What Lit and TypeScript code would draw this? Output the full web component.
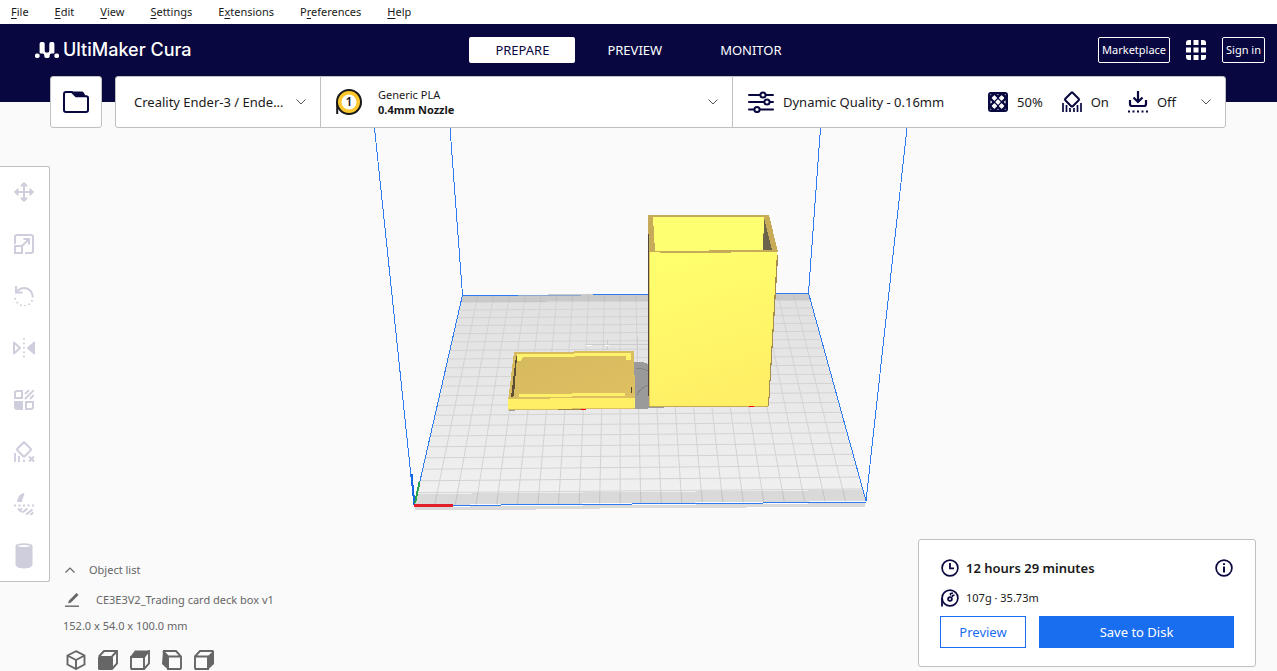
import { LitElement, html, css, svg, nothing } from "lit";
import { customElement, property } from "lit/decorators.js";

type Pt = [number, number];

/* ---- build plate geometry ---- */
const BL: Pt = [462, 295];
const BR: Pt = [809, 293];
const FR: Pt = [866, 501];
const FL: Pt = [414, 505];

/* maps (u, v) in the unit square onto the plate as seen by the camera */
function project(u: number, v: number): Pt {
  const dx1 = BR[0] - FR[0], dx2 = FL[0] - FR[0];
  const dy1 = BR[1] - FR[1], dy2 = FL[1] - FR[1];
  const sx = BL[0] - BR[0] + FR[0] - FL[0];
  const sy = BL[1] - BR[1] + FR[1] - FL[1];
  const det = dx1 * dy2 - dx2 * dy1;
  const g = (sx * dy2 - dx2 * sy) / det;
  const h = (dx1 * sy - sx * dy1) / det;
  const a = BR[0] - BL[0] + g * BR[0], b = FL[0] - BL[0] + h * FL[0];
  const d = BR[1] - BL[1] + g * BR[1], e = FL[1] - BL[1] + h * FL[1];
  const w = g * u + h * v + 1;
  return [(a * u + b * v + BL[0]) / w, (d * u + e * v + BL[1]) / w];
}

const poly = (...pts: Pt[]) => pts.map((p) => p.map((n) => n.toFixed(1)).join(",")).join(" ");
const CELLS = 22;
const gridPath = (() => {
  const out: string[] = [];
  const line = (p: Pt, q: Pt) =>
    out.push(`M${p[0].toFixed(1)} ${p[1].toFixed(1)}L${q[0].toFixed(1)} ${q[1].toFixed(1)}`);
  for (let i = 1; i < CELLS; i++) {
    const t = i / CELLS;
    line(project(t, 0), project(t, 1));
    line(project(0, t), project(1, t));
  }
  return out.join("");
})();

/* ---- icons ---- */
const ICONS: Record<string, { box: string; body: unknown }> = {
  folder: {
    box: "0 0 26 22",
    body: svg`<path d="M3 1.1H8.8L13 5.2H23.2Q25 5.2 25 7V19Q25 20.9 23 20.9H3Q1 20.9 1 19V3Q1 1.1 3 1.1Z" fill="none" stroke="currentColor" stroke-width="2"/><path d="M9 .6H18.5Q20 .6 20.8 1.8L23 5.4H13.2Z" fill="currentColor"/>`,
  },
  down: { box: "0 0 10 6", body: svg`<path d="M.5 .5L5 5L9.500 .5" fill="none" stroke="currentColor"/>` },
  up: { box: "0 0 10 6", body: svg`<path d="M.5 5.500L5 1L9.500 5.500" fill="none" stroke="currentColor" stroke-width="1.200"/>` },
  spool: {
    box: "0 0 26 26",
    body: svg`<path d="M1.200 13V25" stroke="#191919" stroke-width="2"/><circle cx="13" cy="13" r="12" fill="#ffc72e" stroke="#191919" stroke-width="2"/><circle cx="13" cy="13" r="7.500" fill="#fff"/>`,
  },
  sliders: {
    box: "0 0 26 22",
    body: svg`<g fill="none" stroke="currentColor" stroke-width="2"><path d="M1 4H12M18 4H25M1 11H16M22 11H25M1 18.500H6M12 18.500H25" stroke-linecap="round"/><circle cx="15" cy="4" r="2.600"/><circle cx="19" cy="11" r="2.600"/><circle cx="9" cy="18.500" r="2.600"/></g>`,
  },
  infill: {
    box: "0 0 20 20",
    body: svg`<rect width="20" height="20" rx="3" fill="currentColor"/><path fill="#fff" stroke="#fff" stroke-width="1.200" stroke-linejoin="round" d="M6.400 4L8.400 6L6.400 8L4.400 6ZM13.600 4L15.600 6L13.600 8L11.600 6ZM10 8L12 10L10 12L8 10ZM6.400 12L8.400 14L6.400 16L4.400 14ZM13.600 12L15.600 14L13.600 16L11.600 14Z"/><path fill="#fff" d="M2.500 8.300L4.300 10L2.500 11.700ZM17.500 8.300L15.700 10L17.500 11.700ZM9 2.300H11L10 3.300ZM9 17.700H11L10 16.700ZM2.300 2.300H3.600L2.300 3.600ZM17.700 2.300H16.400L17.700 3.600ZM2.300 17.700H3.600L2.300 16.400ZM17.700 17.700H16.400L17.700 16.400Z"/>`,
  },
  support: {
    box: "0 0 20 22",
    body: svg`<path d="M10.700 1.700L16.700 7.700Q17.500 8.500 16.700 9.300L11 15Q10 16 9 15L3.300 9.300Q2.500 8.500 3.300 7.700L9.300 1.700Q10 1 10.700 1.700Z" fill="none" stroke="currentColor" stroke-width="2"/><path d="M1 12V21M4.500 14V21M8 17V21M12 17V21M15.500 14V21M19 12V21" stroke="currentColor" stroke-width="1.700"/>`,
  },
  adhesion: {
    box: "0 0 20 22",
    body: svg`<path d="M10 0V10M5.500 6.500L10 11L14.500 6.500M2 9V13Q2 15 4 15H16Q18 15 18 13V9" fill="none" stroke="currentColor" stroke-width="2.200"/><path d="M0 20.500H20" stroke="currentColor" stroke-width="2" stroke-dasharray="2 2.500"/>`,
  },
  apps: {
    box: "0 0 20 20",
    body: svg`<path fill="currentColor" d="M3 0H5V5H0V3Q0 0 3 0ZM7.500 0H12.500V5H7.500ZM15 0H17Q20 0 20 3V5H15ZM0 7.500H5V12.500H0ZM7.500 7.500H12.500V12.500H7.500ZM15 7.500H20V12.500H15ZM0 15H5V20H3Q0 20 0 17ZM7.500 15H12.500V20H7.500ZM15 15H20V17Q20 20 17 20H15Z"/>`,
  },
  mark: {
    box: "0 0 24 16",
    body: svg`<g fill="currentColor"><rect y="11.400" width="4.600" height="4.600" rx="1.700"/><rect x="19.400" y="11.400" width="4.600" height="4.600" rx="1.700"/><path d="M4.600 1.700Q4.600 0 6.300 0H8Q9.700 0 9.700 1.700V8.500Q9.700 10.500 11 10.500H13Q14.300 10.500 14.300 8.500V1.700Q14.300 0 16 0H17.700Q19.400 0 19.400 1.700V10.600Q19.400 11.600 18.400 11.600H16.500Q14.700 11.600 14.700 13.200V14.300Q14.700 16 13 16H11Q9.300 16 9.300 14.300V13.200Q9.300 11.600 7.500 11.600H5.600Q4.600 11.600 4.600 10.600Z"/></g>`,
  },
  move: {
    box: "0 0 20 20",
    body: svg`<path d="M10 1.500V18.500M1.500 10H18.500M7 4.300L10 1.300L13 4.300M7 15.700L10 18.700L13 15.700M4.300 7L1.300 10L4.300 13M15.700 7L18.700 10L15.700 13" fill="none" stroke="currentColor" stroke-width="2.100"/>`,
  },
  scale: {
    box: "0 0 20 20",
    body: svg`<path d="M1 10V3Q1 1 3 1H17Q19 1 19 3V17Q19 19 17 19H11M1 12H8V19H1ZM8 12L15 5M9.500 5H15V10.500" fill="none" stroke="currentColor" stroke-width="2"/>`,
  },
  rotate: {
    box: "0 0 20 20",
    body: svg`<path d="M2 0V6.500H8.500M2.500 6Q5.500 2 10.500 2Q18 2.500 19 11.500" fill="none" stroke="currentColor" stroke-width="2"/><path d="M18 15A9 9 0 0 1 1 11" fill="none" stroke="currentColor" stroke-width="2" stroke-linecap="round" stroke-dasharray="0 4.300"/>`,
  },
  mirror: {
    box: "0 0 22 20",
    body: svg`<path d="M1 4.500L7 10L1 15.500Z" fill="none" stroke="currentColor" stroke-width="2" stroke-linejoin="round"/><path d="M22 4V16Q21.500 17 20.500 16L14.500 11Q14 10 14.500 9L20.500 4Q21.500 3 22 4Z" fill="currentColor"/><path d="M11 1V20" stroke="currentColor" stroke-width="2" stroke-linecap="round" stroke-dasharray="0 4.400"/>`,
  },
  modeltype: {
    box: "0 0 20 20",
    body: svg`<path d="M3 1H8V8H1V3Q1 1 3 1ZM12 12H19V17Q19 19 17 19H12Z" fill="none" stroke="currentColor" stroke-width="2"/><path d="M0 11H9V20H3Q0 20 0 17Z" fill="currentColor"/><path d="M11 4L15 0M11 9L20 0M16 9L20 5" stroke="currentColor" stroke-width="1.900"/>`,
  },
  blocker: {
    box: "0 0 21 22",
    body: svg`<path d="M10.700 1.700L16.700 7.700Q17.500 8.500 16.700 9.300L11 15Q10 16 9 15L3.300 9.300Q2.500 8.500 3.300 7.700L9.300 1.700Q10 1 10.700 1.700Z" fill="none" stroke="currentColor" stroke-width="2"/><path d="M1 12V21M5 15V21M10 18.500V21" stroke="currentColor" stroke-width="1.800"/><path d="M15 15.500L20 20.500M20 15.500L15 20.500" stroke="currentColor" stroke-width="2"/>`,
  },
  overhang: {
    box: "0 0 20 22",
    body: svg`<path d="M3 9Q4 1 10 0Q11 1.500 9.500 3.500Q8 6 8 9Z" fill="currentColor"/><path d="M0 12.500H20" stroke="currentColor" stroke-width="2" stroke-dasharray="2 2.500"/><path d="M4 15.500L7.500 19M8 15.500L5.500 17.500M8.500 19.500L13.500 15.500M12 21.500L18.500 16.500M16 22L19.500 19.500" stroke="currentColor" stroke-width="2"/>`,
  },
  cylinder: {
    box: "0 0 18 26",
    body: svg`<path d="M1 3V22.500Q3 25 9 25T17 22.500V3Z" fill="currentColor" stroke="currentColor"/><ellipse cx="9" cy="3" rx="7.500" ry="1.800" fill="#fff" stroke="currentColor" stroke-width="1.800"/>`,
  },
  pencil: {
    box: "0 0 14 14",
    body: svg`<path d="M3 10.500L4 7.500L11.500 0L13.500 2L6 9.500Z" fill="currentColor"/><path d="M0 13.200H14" stroke="currentColor" stroke-width="1.400"/>`,
  },
  clock: {
    box: "0 0 18 18",
    body: svg`<circle cx="9" cy="9" r="7.900" fill="none" stroke="currentColor" stroke-width="1.700"/><path d="M9 4V9.300H13" fill="none" stroke="currentColor" stroke-width="1.800"/>`,
  },
  material: {
    box: "0 0 18 18",
    body: svg`<circle cx="9" cy="9" r="7.900" fill="none" stroke="currentColor" stroke-width="1.700"/><path d="M1 9V17.500" stroke="currentColor" stroke-width="1.800"/><circle cx="9" cy="10" r="1.900" fill="none" stroke="currentColor" stroke-width="1.800"/><path d="M9.500 6.500V4.500L12 4M11.500 8V6.500L13.500 6" fill="none" stroke="currentColor" stroke-width="1.500"/>`,
  },
  info: {
    box: "0 0 18 18",
    body: svg`<circle cx="9" cy="9" r="7.900" fill="none" stroke="currentColor" stroke-width="1.700"/><path d="M9 4.200V6M9 7.500V13.500" stroke="currentColor" stroke-width="2"/>`,
  },
  view3d: {
    box: "0 0 20 20",
    body: svg`<path d="M10 1.200L18.500 5.500V14.500L10 19L1.500 14.500V5.500ZM1.500 5.500L10 10L18.500 5.500M10 10V19" fill="none" stroke="currentColor" stroke-width="1.900"/>`,
  },
  viewFront: {
    box: "0 0 20 20",
    body: svg`<path d="M1 6.500L6 1H19V13.500L14 19M14 6.500L19 1" fill="none" stroke="currentColor" stroke-width="1.900"/><rect y="6" width="15" height="14" rx="1.500" fill="currentColor"/>`,
  },
  viewTop: {
    box: "0 0 20 20",
    body: svg`<path d="M0 7L5 .5H20L15 7Z" fill="currentColor"/><path d="M1 7H14V19H2Q1 19 1 18ZM14 7L19 1V13.500L14 19" fill="none" stroke="currentColor" stroke-width="1.900"/>`,
  },
  viewLeft: {
    box: "0 0 20 20",
    body: svg`<path d="M1 1L6.500 6.500V20L0 14Z" fill="currentColor"/><path d="M1 1H14L19 6.500V18Q19 19 18 19H6V6.500H19M1 1L6 6.500" fill="none" stroke="currentColor" stroke-width="1.900"/>`,
  },
  viewRight: {
    box: "0 0 20 20",
    body: svg`<path d="M13.500 6.500L20 0V14L13.500 20Z" fill="currentColor"/><path d="M1 6.500H14V19H2Q1 19 1 18ZM1 6.500L6 1H19" fill="none" stroke="currentColor" stroke-width="1.900"/>`,
  },
};

function icon(name: string) {
  const { box, body } = ICONS[name];
  const [, , w, h] = box.split(" ");
  return html`<svg class="icon" aria-hidden="true" viewBox=${box} width=${w} height=${h}>${body}</svg>`;
}

const base = css`
  *,
  *::before,
  *::after {
    box-sizing: border-box;
  }
  button {
    font: inherit;
    color: inherit;
    background: none;
    border: 0;
    padding: 0;
    margin: 0;
    text-align: left;
    cursor: pointer;
  }
  .icon {
    display: block;
    flex: none;
  }
`;

@customElement("build-scene")
export class BuildScene extends LitElement {
  static styles = css`
    :host {
      display: block;
    }
    .view {
      display: block;
      width: 100%;
      height: 100%;
    }
  `;

  render() {
    return html`<svg class="view" viewBox="0 0 1277 671" role="img" aria-label="Build plate with a deck box and its lid" shape-rendering="crispEdges">
      <defs>
        <linearGradient id="plate" x1="0" y1="0" x2="0" y2="1">
          <stop offset="0" stop-color="#e0e0e0" /><stop offset="1" stop-color="#f1f1f1" />
        </linearGradient>
        <linearGradient id="front" x1="0" y1="0" x2=".25" y2="1">
          <stop offset="0" stop-color="#ffff6d" /><stop offset=".4" stop-color="#fffa6a" /><stop offset="1" stop-color="#ffef66" />
        </linearGradient>
        <linearGradient id="lid" x1="0" y1="0" x2="1" y2="1">
          <stop offset="0" stop-color="#d6b95e" /><stop offset="1" stop-color="#dfc163" />
        </linearGradient>
      </defs>
      <polygon points="415,507 865,503 865,507 632,508 505,510 415,510" fill="#dadada" />
      <polygon points=${poly(BL, BR, FR, FL)} fill="url(#plate)" />
      <path d=${gridPath} stroke="#d3d3d3" fill="none" shape-rendering="auto" />
      <polygon points="462,295 809,293 811,300 461,302" fill="#888" fill-opacity=".25" />
      <polygon points="417,494 864,490 866,501 414,505" fill="#888" fill-opacity=".22" />
      <g fill="none" stroke="#2c7bf2">
        <path d="M374.500 128L414 505M450 128L462.500 295M820.500 128L808.500 293M907 128L866 501" />
        <path d="M462.500 295L414.500 505M808.500 293L866 501" />
        <path d="M414 505.500H501M501 504.500H632M632 503.500H763M763 502.500H866M593 294.500H700M700 293.500H809M462 295.500H518" />
        <path d="M518 295.500H581" stroke="#8aa9d0" />
      </g>
      <path d="M585 344.500H648M637 337V358M607 340V350" stroke="#cccccc" />
      <path d="M586 345.500H592M605 345.500H609" stroke="#fff" />
      <polygon points="634,362 642,362 649,364 649,405 672,407 640,409 634,409" fill="#9a9a9a" />
      <path d="M636 368Q643 368 648 371M637 395Q640 388 648 385" fill="none" stroke="#848484" />
      <path d="M509 410.500H515" stroke="#9a9a9a" />

      <polygon points="514,352 634,351 635,397 635,409 508,410 508,401" fill="url(#lid)" />
      <polygon points="517,354 631,353 631,360 626,360 626,356 523,357 521,361 517,361" fill="#fff36b" />
      <polygon points="516,356 517,356 514,396 511,397" fill="#5c4f35" />
      <path d="M631.500 387V393" stroke="#4e452f" />
      <polygon points="519,394 625,393 625,396 519,397" fill="#fff06a" />
      <polygon points="508,399 635,397.500 635,408 508,409" fill="#ffef66" />
      <path d="M558 409.500H586" stroke="#a18440" /><path d="M581 409.500H586" stroke="#f00" />

      <polygon points="648,228 650,228 650,396 648,396" fill="#4e493a" />
      <polygon points="648,215 769,215 778,252 649,252" fill="#c7ab58" />
      <polygon points="653,217 764,217 763,250 655,251" fill="#ffff72" />
      <polygon points="764,218 772,250 763,250" fill="#6d644c" />
      <polygon points="777,252 778,258 769,406 767,406" fill="#a58c4c" />
      <polygon points="650,252.500 777,252 768,405.500 650,406.500" fill="url(#front)" />
      <path d="M660 251.500H731" stroke="#c7ab58" stroke-width="2" />
      <path d="M649.500 252V406" stroke="#e4c257" />
      <path d="M650 406.500H768" stroke="#c9a950" /><path d="M749 406.500H754" stroke="#f00" />

      <path d="M414.500 505L411.500 474" stroke="#1468e8" stroke-width="2" />
      <path d="M415 503L419.500 482" stroke="#26a248" stroke-width="2" />
      <path d="M414 505.500H453" stroke="#e01f28" stroke-width="3" />
    </svg>`;
  }
}

@customElement("tool-bar")
export class ToolBar extends LitElement {
  @property({ attribute: false }) tools: [string, string][] = [];

  static styles = [
    base,
    css`
      :host {
        display: block;
      }
      .rail {
        display: flex;
        flex-direction: column;
        background: #fff;
        border-radius: 0 3px 3px 0;
        box-shadow: inset -1px 0 #c0c0c0, inset 0 1px #c0c0c0, inset 0 -1px #c0c0c0;
        color: #cfcedd;
      }
      .tool {
        display: grid;
        place-items: center;
        width: 50px;
        height: 52px;
        padding-right: 2px;
      }
      .tool:disabled {
        cursor: default;
      }
    `,
  ];

  render() {
    return html`<div class="rail" role="toolbar" aria-label="Tools">
      ${this.tools.map(([name, label]) => html`<button class="tool" disabled aria-label=${label}>${icon(name)}</button>`)}
    </div>`;
  }
}

@customElement("app-root")
export class AppRoot extends LitElement {
  /* label split round its mnemonic letter */
  private menus: [string, string, string][] = [
    ["", "F", "ile"],
    ["", "E", "dit"],
    ["", "V", "iew"],
    ["", "S", "ettings"],
    ["E", "x", "tensions"],
    ["P", "r", "eferences"],
    ["", "H", "elp"],
  ];
  private stages = ["PREPARE", "PREVIEW", "MONITOR"];
  private tools: [string, string][] = [
    ["move", "Move"],
    ["scale", "Scale"],
    ["rotate", "Rotate"],
    ["mirror", "Mirror"],
    ["modeltype", "Per model settings"],
    ["blocker", "Support blocker"],
    ["overhang", "Paint supports"],
    ["cylinder", "Tab anti warping"],
  ];
  private cameras: [string, string][] = [
    ["view3d", "3D view"],
    ["viewFront", "Front view"],
    ["viewTop", "Top view"],
    ["viewLeft", "Left view"],
    ["viewRight", "Right view"],
  ];

  static styles = [
    base,
    css`
      :host {
        display: flex;
        flex-direction: column;
        position: relative;
        isolation: isolate;
        min-height: 100vh;
        overflow: hidden;
        background: #fafafa;
        color: #191919;
        font: 13px/18px "Noto Sans", sans-serif;
      }
      .scene {
        position: absolute;
        inset: 0;
        z-index: -2;
      }
      .menubar {
        display: flex;
        gap: 26px;
        height: 24px;
        padding: 0 11px;
        background: #fff;
        font-size: 11px;
      }
      .menubar u {
        text-underline-offset: 2px;
      }
      .header {
        display: grid;
        grid-template-columns: 1fr auto 1fr;
        align-items: center;
        height: 78px;
        padding-bottom: 26px;
        background: #08073f;
        color: #fff;
      }
      .brand {
        display: flex;
        align-items: center;
        gap: 4px;
        padding-left: 35px;
        font: 500 18px/24px Inter, sans-serif;
      }
      .stages {
        display: flex;
        gap: 6px;
      }
      .stage {
        height: 26px;
        padding: 0 26px;
        border-radius: 2px;
      }
      .stage.active {
        background: #fff;
        color: #08073f;
      }
      .account {
        display: flex;
        align-items: center;
        justify-content: flex-end;
        gap: 16px;
        padding-right: 12px;
      }
      .outlined {
        height: 26px;
        padding: 0 3px;
        border: 1px solid #fff;
        border-radius: 2px;
        font-size: 11px;
      }
      .config {
        display: flex;
        gap: 13px;
        height: 52px;
        margin: -26px 51px 0 50px;
      }
      .open {
        display: grid;
        place-items: center;
        width: 52px;
        color: #08073f;
      }
      .open,
      .settings {
        background: #fff;
        border: 1px solid #c0c0c0;
        border-radius: 3px;
      }
      .settings {
        flex: 1;
        display: grid;
        grid-template-columns: 204fr 412fr 493fr;
      }
      .cell {
        display: flex;
        align-items: center;
        min-width: 0;
        padding: 0 14px 0 18px;
      }
      .cell + .cell {
        padding-left: 15px;
        border-left: 1px solid #c0c0c0;
      }
      .chevron {
        margin-left: auto;
        color: #555;
      }
      .extruder {
        display: grid;
        place-items: center;
        margin-right: 16px;
      }
      .extruder > * {
        grid-area: 1 / 1;
      }
      .num {
        font-size: 12px;
        font-weight: 600;
      }
      .stack {
        display: flex;
        flex-direction: column;
        font-size: 11px;
        line-height: 15px;
      }
      .strong {
        font-weight: 700;
      }
      .label {
        display: flex;
        align-items: center;
        gap: 9px;
      }
      .label .icon {
        color: #08073f;
      }
      .summary {
        display: flex;
        gap: 19px;
        margin-left: auto;
        padding-right: 25px;
      }
      .summary + .chevron {
        margin-left: 0;
      }
      .workspace {
        flex: 1;
        display: grid;
        grid-template-columns: auto 1fr auto;
        align-items: end;
      }
      .rail {
        align-self: start;
        margin-top: 38px;
      }
      .objects {
        display: flex;
        flex-direction: column;
        align-items: flex-start;
        padding-left: 13px;
        color: #666;
        font-size: 11px;
      }
      .toggle {
        display: flex;
        align-items: center;
        gap: 14px;
        height: 30px;
        padding-left: 2px;
      }
      .name {
        display: flex;
        align-items: center;
        gap: 17px;
        height: 30px;
        padding-left: 2px;
      }
      .size {
        margin: 0;
        height: 22px;
        line-height: 22px;
      }
      .cameras {
        display: flex;
        gap: 12px;
        padding: 13px 3px 1px;
      }
      .card {
        width: 338px;
        margin: 0 21px 4px 0;
        padding: 13px 21px 18px;
        background: #fff;
        border: 1px solid #c0c0c0;
        border-radius: 3px;
      }
      .line {
        display: flex;
        align-items: center;
        gap: 7px;
        height: 30px;
        padding: 0 1px;
      }
      .line.strong {
        font-weight: 600;
      }
      .line .icon {
        color: #08073f;
      }
      .line .info {
        margin-left: auto;
      }
      .small {
        font-size: 11px;
      }
      .actions {
        display: flex;
        gap: 13px;
        margin-top: 3px;
      }
      .btn {
        height: 32px;
        border: 1px solid #196ef0;
        text-align: center;
        color: #196ef0;
        background: #fff;
      }
      .btn.preview {
        width: 86px;
      }
      .btn.primary {
        flex: 1;
        background: #196ef0;
        color: #fff;
      }
    `,
  ];

  render() {
    return html`
      <build-scene class="scene"></build-scene>
      <nav class="menubar" aria-label="Main menu">
        ${this.menus.map(([a, key, b]) => html`<button>${a || nothing}<u>${key}</u>${b}</button>`)}
      </nav>
      <header class="header">
        <div class="brand">${icon("mark")}<span>UltiMaker Cura</span></div>
        <nav class="stages" aria-label="Stages">
          ${this.stages.map((s, i) => html`<button class="stage ${i === 0 ? "active" : ""}">${s}</button>`)}
        </nav>
        <div class="account">
          <button class="outlined">Marketplace</button>
          <button aria-label="Applications">${icon("apps")}</button>
          <button class="outlined">Sign in</button>
        </div>
      </header>
      <div class="config">
        <button class="open" aria-label="Open file">${icon("folder")}</button>
        <div class="settings">
          <button class="cell"><span>Creality Ender-3 / Ende...</span><span class="chevron">${icon("down")}</span></button>
          <button class="cell">
            <span class="extruder">${icon("spool")}<span class="num">1</span></span>
            <span class="stack"><span>Generic PLA</span><span class="strong">0.4mm Nozzle</span></span>
            <span class="chevron">${icon("down")}</span>
          </button>
          <button class="cell">
            <span class="label">${icon("sliders")}Dynamic Quality - 0.16mm</span>
            <span class="summary">
              <span class="label">${icon("infill")}50%</span>
              <span class="label">${icon("support")}On</span>
              <span class="label">${icon("adhesion")}Off</span>
            </span>
            <span class="chevron">${icon("down")}</span>
          </button>
        </div>
      </div>
      <main class="workspace">
        <tool-bar class="rail" .tools=${this.tools}></tool-bar>
        <section class="objects" aria-label="Objects">
          <button class="toggle">${icon("up")}Object list</button>
          <button class="name">${icon("pencil")}CE3E3V2_Trading card deck box v1</button>
          <p class="size">152.0 x 54.0 x 100.0 mm</p>
          <div class="cameras">
            ${this.cameras.map(([name, label]) => html`<button aria-label=${label}>${icon(name)}</button>`)}
          </div>
        </section>
        <section class="card" aria-label="Print job">
          <div class="line strong">
            ${icon("clock")}<span>12 hours 29 minutes</span>
            <button class="info" aria-label="Print details">${icon("info")}</button>
          </div>
          <div class="line small">${icon("material")}<span>107g · 35.73m</span></div>
          <div class="actions">
            <button class="btn preview">Preview</button>
            <button class="btn primary">Save to Disk</button>
          </div>
        </section>
      </main>
    `;
  }
}
